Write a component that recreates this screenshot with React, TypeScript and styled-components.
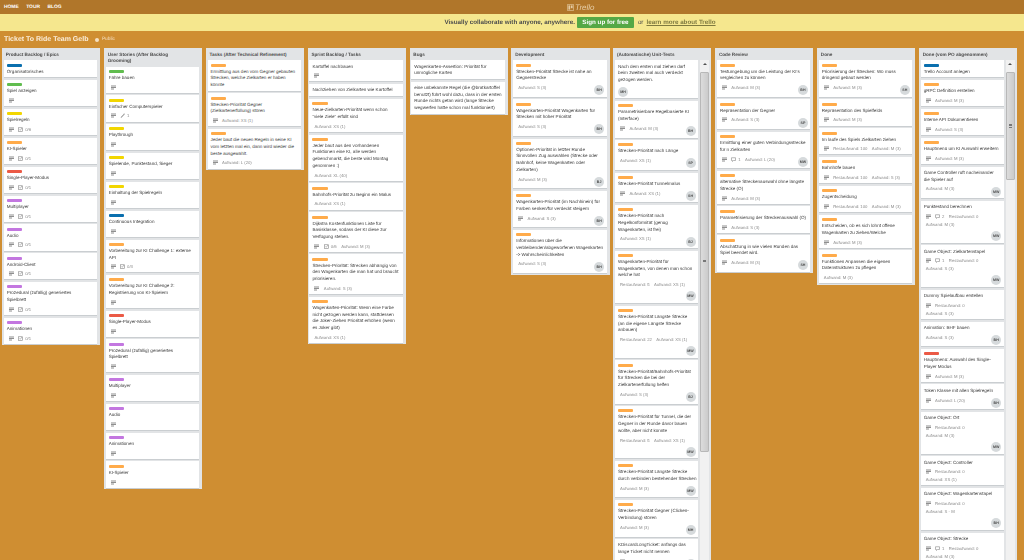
import styled, { createGlobalStyle } from "styled-components";

const GlobalStyle = createGlobalStyle`
    html, body {
        margin: 0;
        height: 100%;
        overflow: hidden;
        background: #cf8e32;
    }
    #root {
        height: 100%;
    }
`;

const Page = styled.div`
    height: 100%;
    display: flex;
    flex-direction: column;
    overflow: hidden;
    font-family: "Liberation Sans", Arial, sans-serif;
    text-rendering: geometricPrecision;
    color: #444;
    filter: blur(0.25px);
`;

const TopBar = styled.header`
    height: 14px;
    flex: none;
    background: #b0762a;
    display: flex;
    align-items: center;
    padding-left: 4px;
`;

const TopLink = styled.a`
    color: #fff;
    font-size: 4.9px;
    font-weight: 700;
    margin-right: 7.5px;
    text-transform: uppercase;
`;

const Logo = styled.div`
    margin-left: 498px;
    display: flex;
    align-items: center;
    gap: 1px;
    color: #e6cda5;
    font-size: 8px;
    font-style: italic;
`;

const Banner = styled.div`
    height: 17px;
    flex: none;
    box-sizing: border-box;
    padding-left: 136px;
    background: #f5e78e;
    display: flex;
    align-items: center;
    justify-content: center;
    font-size: 6.25px;
    color: #4d4d4d;
`;

const Pitch = styled.strong`
    font-size: 6.25px;
`;

const SignUp = styled.span`
    margin: 0 4px 0 2px;
    width: 57px;
    height: 11.5px;
    display: flex;
    align-items: center;
    justify-content: center;
    background: #55a845;
    color: #fff;
    font-weight: 700;
    border-radius: 1px;
`;

const LearnMore = styled.a`
    margin-left: 3px;
    color: #7f7a40;
    text-decoration: underline;
    font-weight: 700;
`;

const BoardHeader = styled.div`
    height: 17px;
    flex: none;
    display: flex;
    align-items: center;
    padding-left: 4px;
    color: #fbeedb;
`;

const BoardTitle = styled.h1`
    margin: 0;
    font-size: 7px;
    font-weight: 700;
`;

const Visibility = styled.span`
    margin-left: 7px;
    display: flex;
    align-items: center;
    gap: 2.5px;
    font-size: 4.8px;
    opacity: 0.85;
    &::before {
        content: "";
        width: 4px;
        height: 4px;
        border-radius: 50%;
        background: #fbeedb;
    }
`;

const Board = styled.main`
    flex: 1;
    min-height: 0;
    display: flex;
    align-items: flex-start;
    gap: 3.7px;
    padding-left: 2px;
`;

const ListBox = styled.section`
    flex: none;
    width: 98.2px;
    box-sizing: border-box;
    padding: 0 3px 1.5px 1.8px;
    background: #e2e4e6;
`;

const ListTitle = styled.h2`
    margin: 0;
    padding: 3.5px 8px 2.6px 2px;
    font-size: 4.65px;
    line-height: 6.2px;
    font-weight: 700;
    color: #4d4d4d;
`;

const ListBody = styled.div`
    display: flex;
    gap: 2px;
`;

const Cards = styled.div`
    flex: 1;
    min-width: 0;
    display: flex;
    flex-direction: column;
    gap: 2.7px;
`;

const CardBox = styled.article`
    padding: 3.3px 2.4px 1.6px 3px;
    background: #fff;
    box-shadow: 0 0.8px 0 #c4c9cc;
`;

const LabelBar = styled.div<{ $color: string }>`
    width: 15.3px;
    height: 3px;
    margin-bottom: 2px;
    border-radius: 1px;
    background: ${(p) => p.$color};
`;

const CardText = styled.p`
    margin: 0 0 0.6px;
    font-size: 4.55px;
    line-height: 6.67px;
    color: #3a3a3a;
    white-space: pre;
`;

const Footer = styled.div<{ $stacked?: boolean }>`
    display: flex;
    flex-direction: ${(p) => (p.$stacked ? "column" : "row")};
    justify-content: space-between;
    align-items: flex-start;
`;

const Badges = styled.div`
    padding-top: 1px;
`;

const BadgeRow = styled.div`
    height: 8px;
    display: flex;
    align-items: center;
    gap: 4.4px;
    padding-left: 2px;
`;

const Badge = styled.span`
    display: flex;
    align-items: center;
    gap: 2px;
    font-size: 4.25px;
    color: #8c8c8c;
    white-space: nowrap;
    & svg {
        flex: none;
        color: #8f8f8f;
    }
`;

const Avatar = styled.span`
    flex: none;
    align-self: flex-end;
    width: 10px;
    height: 10px;
    margin-top: 2.6px;
    margin-right: 0;
    border-radius: 50%;
    background: #d6dadc;
    display: flex;
    align-items: center;
    justify-content: center;
    font-size: 3.6px;
    font-weight: 700;
    color: #4d4d4d;
`;

const ScrollTrack = styled.div`
    flex: none;
    width: 9.5px;
    margin-right: -1px;
    background: #f1f1f1;
    display: flex;
    flex-direction: column;
    align-items: center;
    padding-top: 3px;
    box-sizing: border-box;
`;

const ScrollArrow = styled.span`
    width: 0;
    height: 0;
    margin-bottom: 6.5px;
    border-left: 2px solid transparent;
    border-right: 2px solid transparent;
    border-bottom: 2.5px solid #505050;
`;

const ScrollThumb = styled.div<{ $height: number }>`
    width: 9px;
    height: ${(p) => p.$height}px;
    box-sizing: border-box;
    border: 0.5px solid #b8b8b8;
    border-radius: 1px;
    background: linear-gradient(to right, #dcdcdc, #cbcbcb);
    display: flex;
    align-items: center;
    justify-content: center;
`;

const Grip = styled.span`
    width: 3.5px;
    height: 3.5px;
    background: repeating-linear-gradient(to bottom, #777 0 0.7px, transparent 0.7px 1.4px);
`;

const LABELS: Record<string, string> = {
    b: "#0a6fae",
    g: "#61bd4f",
    y: "#f2d600",
    o: "#ffab4a",
    r: "#eb5a46",
    p: "#c377e0",
};

function DescIcon() {
    return (
        <svg width="5" height="5" viewBox="0 0 10 10" fill="currentColor">
            <rect x="0" y="1" width="10" height="2" />
            <rect x="0" y="4" width="10" height="2" />
            <rect x="0" y="7" width="6" height="2" />
        </svg>
    );
}

function CheckIcon() {
    return (
        <svg width="5" height="5" viewBox="0 0 10 10" fill="none" stroke="currentColor" strokeWidth="1.3">
            <rect x="1" y="1.5" width="8" height="7.5" />
            <path d="M3 5l1.5 1.5L8 2" />
        </svg>
    );
}

function CommentIcon() {
    return (
        <svg width="5" height="5" viewBox="0 0 10 10" fill="none" stroke="currentColor" strokeWidth="1.3">
            <path d="M1 1.5h8v5.5H5L3 9V7H1z" />
        </svg>
    );
}

function AttachIcon() {
    return (
        <svg width="5" height="5" viewBox="0 0 10 10" fill="none" stroke="currentColor" strokeWidth="1.3">
            <path d="M8.5 1.5L3 7l-1 2 2-1 5-5.5-1-1z" />
        </svg>
    );
}

// a badge row is a string: d = description, k: = checklist, m: = comments, a: = attachment, anything else is plain text
function renderBadge(token: string) {
    if (token === "d") {
        return (
            <Badge key={token}>
                <DescIcon />
            </Badge>
        );
    }
    const kind = token.slice(0, 2);
    const value = token.slice(2);
    if (kind === "k:" || kind === "m:" || kind === "a:") {
        return (
            <Badge key={token}>
                {kind === "k:" && <CheckIcon />}
                {kind === "m:" && <CommentIcon />}
                {kind === "a:" && <AttachIcon />}
                {value}
            </Badge>
        );
    }
    return <Badge key={token}>{token}</Badge>;
}

type CardData = {
    label?: string;
    text: string;
    rows?: string[];
    avatar?: string;
    stacked?: boolean;
};

function Card({ label, text, rows, avatar, stacked }: CardData) {
    return (
        <CardBox>
            {label && <LabelBar $color={LABELS[label]} />}
            <CardText>{text}</CardText>
            {(rows || avatar) && (
                <Footer $stacked={stacked}>
                    {rows && (
                        <Badges>
                            {rows.map((row) => (
                                <BadgeRow key={row}>{row.split("|").map(renderBadge)}</BadgeRow>
                            ))}
                        </Badges>
                    )}
                    {avatar && <Avatar>{avatar}</Avatar>}
                </Footer>
            )}
        </CardBox>
    );
}

type ListData = {
    title: string;
    cards: CardData[];
    thumb?: number;
};

const LISTS: ListData[] = [
    {
        title: "Product Backlog / Epics",
        cards: [
            { label: "b", text: "Organisatorisches" },
            { label: "g", text: "Spiel anzeigen", rows: ["d"] },
            { label: "y", text: "Spielregeln", rows: ["d|k:0/6"] },
            { label: "o", text: "KI-Spieler", rows: ["d|k:0/1"] },
            { label: "r", text: "Single-Player-Modus", rows: ["d|k:0/1"] },
            { label: "p", text: "Multiplayer", rows: ["d|k:0/1"] },
            { label: "p", text: "Audio", rows: ["d|k:0/1"] },
            { label: "p", text: "Android-Client", rows: ["d|k:0/1"] },
            { label: "p", text: "Prozedural (zufällig) generiertes\nSpielbrett", rows: ["d|k:0/1"] },
            { label: "p", text: "Animationen", rows: ["d|k:0/1"] },
        ],
    },
    {
        title: "User Stories (After Backlog Grooming)",
        cards: [
            { label: "g", text: "Fähre bauen", rows: ["d"] },
            { label: "y", text: "Einfacher Computerspieler", rows: ["d|a:1"] },
            { label: "y", text: "Playthrough", rows: ["d"] },
            { label: "y", text: "Spielende, Punktestand, Sieger", rows: ["d"] },
            { label: "y", text: "Einhaltung der Spielregeln", rows: ["d"] },
            { label: "b", text: "Continuous Integration", rows: ["d"] },
            { label: "o", text: "Vorbereitung zur KI Challenge 1: externe\nAPI", rows: ["d|k:0/3"] },
            { label: "o", text: "Vorbereitung zur KI Challenge 2:\nRegistrierung von KI-Spielern", rows: ["d"] },
            { label: "r", text: "Single-Player-Modus", rows: ["d"] },
            { label: "p", text: "Prozedural (zufällig) generiertes\nSpielbrett", rows: ["d"] },
            { label: "p", text: "Multiplayer", rows: ["d"] },
            { label: "p", text: "Audio", rows: ["d"] },
            { label: "p", text: "Animationen", rows: ["d"] },
            { label: "o", text: "KI-Spieler", rows: ["d"] },
        ],
    },
    {
        title: "Tasks (After Technical Refinement)",
        cards: [
            { label: "o", text: "Ermittlung aus den vom Gegner gebauten\nStrecken, welche Zielkarten er haben\nkönnte" },
            { label: "o", text: "Strecken-Priorität Gegner\n(Zielkartenerfüllung) stören", rows: ["d|Aufwand: XS (1)"] },
            {
                label: "o",
                text: "Jeder baut die neuen Regeln in seine KI\nvom letzten mal ein, dann wird wieder die\nbeste ausgewählt.",
                rows: ["d|Aufwand: L (20)"],
            },
        ],
    },
    {
        title: "Sprint Backlog / Tasks",
        cards: [
            { text: "Kartoffel nachbauen", rows: ["d"] },
            { text: "Nachziehen von Zielkarten wie Kartoffel" },
            { label: "o", text: "Neue-Zielkarten-Priorität wenn schon\n\"viele Ziele\" erfüllt sind", rows: ["Aufwand: XS (1)"] },
            {
                label: "o",
                text: "Jeder baut aus den vorhandenen\nFunktionen eine KI, alle werden\ngebenchmarkt, die beste wird Montag\ngenommen :)",
                rows: ["Aufwand: XL (40)"],
            },
            { label: "o", text: "Bahnhofs-Priorität zu Beginn ein Malus", rows: ["Aufwand: XS (1)"] },
            {
                label: "o",
                text: "Dijkstra Kostenfunktionen Liste für\nBasisklasse, sodass der KI diese zur\nVerfügung stehen.",
                rows: ["d|k:0/6|Aufwand: M (3)"],
            },
            {
                label: "o",
                text: "Strecken-Priorität: Strecken abhängig von\nden Wagenkarten die man hat und braucht\npriorisieren.",
                rows: ["d|Aufwand: S (3)"],
            },
            {
                label: "o",
                text: "Wagenkarten-Priorität: Wenn eine Farbe\nnicht gezogen werden kann, stattdessen\ndie Joker-Ziehen Priorität erhöhen (wenn\nes Joker gibt)",
                rows: ["Aufwand: XS (1)"],
            },
        ],
    },
    {
        title: "Bugs",
        cards: [
            { text: "Wagenkarten-Assertion: Priorität für\nunmögliche Karten" },
            {
                text: "eine unbekannte Regel (die @bratkartoffel\nbenutzt) führt wohl dazu, dass in der ersten\nRunde nichts getan wird (lange Strecke\nwegwerfen hatte schon mal funktioniert)",
            },
        ],
    },
    {
        title: "Development",
        cards: [
            { label: "o", text: "Strecken-Priorität Strecke ist nahe an\nGegnerstrecke", rows: ["Aufwand: S (3)"], avatar: "BH" },
            { label: "o", text: "Wagenkarten-Priorität Wagenkarten für\nStrecken mit hoher Priorität", rows: ["Aufwand: S (3)"], avatar: "BH" },
            {
                label: "o",
                text: "Optionen-Priorität in letzter Runde\nSinnvollen Zug auswählen (Strecke oder\nBahnhof, keine Wagenkarten oder\nZielkarten)",
                rows: ["Aufwand: M (3)"],
                avatar: "BJ",
            },
            {
                label: "o",
                text: "Wagenkarten-Priorität (im Nachhinein) für\nFarben senken/für verdeckt steigern",
                rows: ["d|Aufwand: S (3)"],
                avatar: "BH",
            },
            {
                label: "o",
                text: "Informationen über die\nverbleibenden/abgeworfenen Wagenkarten\n-> Wahrscheinlichkeiten",
                rows: ["Aufwand: S (3)"],
                avatar: "BH",
            },
        ],
    },
    {
        title: "(Automatische) Unit-Tests",
        thumb: 380,
        cards: [
            { text: "Nach dem ersten mal ziehen darf\nbeim zweiten mal auch verdeckt\ngezogen werden.", avatar: "MH" },
            { label: "o", text: "Parametrisierbare Regelbasierte KI\n(Interface)", rows: ["d|Aufwand: M (3)"], avatar: "BH" },
            { label: "o", text: "Strecken-Priorität nach Länge", rows: ["Aufwand: XS (1)"], avatar: "SP" },
            { label: "o", text: "Strecken-Priorität Tunnelmalus", rows: ["d|Aufwand: XS (1)"], avatar: "SH" },
            {
                label: "o",
                text: "Strecken-Priorität nach\nRegelkonformität (genug\nWagenkarten, ist frei)",
                rows: ["Aufwand: XS (1)"],
                avatar: "BJ",
            },
            {
                label: "o",
                text: "Wagenkarten-Priorität für\nWagenkarten, von denen man schon\nwelche hat",
                rows: ["Restaufwand: 5|Aufwand: XS (1)"],
                avatar: "MW",
                stacked: true,
            },
            {
                label: "o",
                text: "Strecken-Priorität Längste Strecke\n(an die eigene Längste Strecke\nanbauen)",
                rows: ["Restaufwand: 22|Aufwand: XS (1)"],
                avatar: "MW",
                stacked: true,
            },
            {
                label: "o",
                text: "Strecken-Priorität/Bahnhofs-Priorität\nfür Strecken die bei der\nZielkartenerfüllung helfen",
                rows: ["Aufwand: S (3)"],
                avatar: "BJ",
            },
            {
                label: "o",
                text: "Strecken-Priorität für Tunnel, die der\nGegner in der Runde davor bauen\nwollte, aber nicht konnte",
                rows: ["Restaufwand: 5|Aufwand: XS (1)"],
                avatar: "MW",
                stacked: true,
            },
            {
                label: "o",
                text: "Strecken-Priorität Längste Strecke\ndurch verbinden bestehender Strecken",
                rows: ["Aufwand: M (3)"],
                avatar: "MW",
            },
            { label: "o", text: "Strecken-Priorität Gegner (Clicken-\nVerbindung) stören", rows: ["Aufwand: M (3)"], avatar: "MH" },
            { text: "KDiscardLongTicket: anfangs das\nlange Ticket nicht nennen", rows: ["d"], avatar: "MW" },
        ],
    },
    {
        title: "Code Review",
        cards: [
            { label: "o", text: "Testumgebung um die Leistung der KI's\nvergleichen zu können", rows: ["d|Aufwand: M (3)"], avatar: "BH" },
            { label: "o", text: "Repräsentation der Gegner", rows: ["d|Aufwand: S (3)"], avatar: "SP" },
            {
                label: "o",
                text: "Ermittlung einer guten Verbindungsstrecke\nfür n Zielkarten",
                rows: ["d|m:1|Aufwand: L (20)"],
                avatar: "MW",
            },
            { label: "o", text: "alternative Streckenauswahl ohne längste\nStrecke (O)", rows: ["d|Aufwand: M (3)"] },
            { label: "o", text: "Parametrisierung der Streckenauswahl (O)", rows: ["d|Aufwand: S (3)"] },
            { label: "o", text: "Abschätzung in wie vielen Runden das\nSpiel beendet wird.", rows: ["d|Aufwand: M (3)"], avatar: "SH" },
        ],
    },
    {
        title: "Done",
        cards: [
            { label: "o", text: "Priorisierung der Strecken: Wo muss\ndringend gebaut werden", rows: ["d|Aufwand: M (3)"], avatar: "SH" },
            { label: "o", text: "Repräsentation des Spielfelds", rows: ["d|Aufwand: M (3)"] },
            { label: "o", text: "Im laufe des Spiels Zielkarten ziehen", rows: ["d|Restaufwand: 100|Aufwand: M (3)"] },
            { label: "o", text: "Bahnhöfe bauen", rows: ["d|Restaufwand: 100|Aufwand: S (3)"] },
            { label: "o", text: "Zugentscheidung", rows: ["d|Restaufwand: 100|Aufwand: M (3)"] },
            { label: "o", text: "Entscheiden, ob es sich lohnt offene\nWagenkarten zu ziehen/Welche", rows: ["d|Aufwand: M (3)"] },
            { label: "o", text: "Funktionen Anpassen die eigenen\nDatenstrukturen zu pflegen", rows: ["Aufwand: M (3)"] },
        ],
    },
    {
        title: "Done (vom PO abgenommen)",
        thumb: 108,
        cards: [
            { label: "b", text: "Trello Account anlegen" },
            { label: "o", text: "gRPC Definition erstellen", rows: ["d|Aufwand: M (3)"] },
            { label: "o", text: "Interne API Dokumentieren", rows: ["d|Aufwand: S (3)"] },
            { label: "o", text: "Hauptmenü um KI Auswahl erweitern", rows: ["d|Aufwand: M (3)"] },
            { text: "Game Controller ruft nacheinander\ndie Spieler auf", rows: ["Aufwand: M (3)"], avatar: "MW" },
            { text: "Punktestand berechnen", rows: ["d|m:2|Restaufwand: 0", "Aufwand: M (3)"], avatar: "MW", stacked: true },
            { text: "Game Object: Zielkartenstapel", rows: ["d|m:1|Restaufwand: 0", "Aufwand: S (3)"], avatar: "MW", stacked: true },
            { text: "Dummy Spielaufbau erstellen", rows: ["d|Restaufwand: 0", "Aufwand: S (3)"] },
            { text: "Animation: BHF bauen", rows: ["Aufwand: S (3)"], avatar: "BH" },
            { label: "r", text: "Hauptmenü: Auswahl des Single-\nPlayer Modus", rows: ["d|Aufwand: M (3)"] },
            { text: "Token Klasse mit allen Spielregeln", rows: ["d|Aufwand: L (20)"], avatar: "BH" },
            { text: "Game Object: Ort", rows: ["d|Restaufwand: 0", "Aufwand: M (3)"], avatar: "MW", stacked: true },
            { text: "Game Object: Controller", rows: ["d|Restaufwand: 0", "Aufwand: XS (1)"] },
            { text: "Game Object: Wagenkartenstapel", rows: ["d|Restaufwand: 0", "Aufwand: S - M"], avatar: "BH", stacked: true },
            { text: "Game Object: Strecke", rows: ["d|m:1|Restaufwand: 0", "Aufwand: M (3)"] },
        ],
    },
];

export default function App() {
    return (
        <>
            <GlobalStyle />
            <Page>
                <TopBar>
                    <TopLink>Home</TopLink>
                    <TopLink>Tour</TopLink>
                    <TopLink>Blog</TopLink>
                    <Logo>
                        <svg width="7" height="7" viewBox="0 0 10 10" fill="none" stroke="currentColor">
                            <rect x="0.5" y="0.5" width="9" height="9" rx="1" />
                            <rect x="2" y="2" width="2.5" height="6" fill="currentColor" stroke="none" />
                            <rect x="5.5" y="2" width="2.5" height="4" fill="currentColor" stroke="none" />
                        </svg>
                        Trello
                    </Logo>
                </TopBar>
                <Banner>
                    <Pitch>Visually collaborate with anyone, anywhere.</Pitch>
                    <SignUp>Sign up for free</SignUp>
                    or
                    <LearnMore>learn more about Trello</LearnMore>
                </Banner>
                <BoardHeader>
                    <BoardTitle>Ticket To Ride Team Gelb</BoardTitle>
                    <Visibility>Public</Visibility>
                </BoardHeader>
                <Board>
                    {LISTS.map((list) => (
                        <ListBox key={list.title}>
                            <ListTitle>{list.title}</ListTitle>
                            <ListBody>
                                <Cards>
                                    {list.cards.map((card, i) => (
                                        <Card key={i} {...card} />
                                    ))}
                                </Cards>
                                {list.thumb && (
                                    <ScrollTrack>
                                        <ScrollArrow />
                                        <ScrollThumb $height={list.thumb}>
                                            <Grip />
                                        </ScrollThumb>
                                    </ScrollTrack>
                                )}
                            </ListBody>
                        </ListBox>
                    ))}
                </Board>
            </Page>
        </>
    );
}
